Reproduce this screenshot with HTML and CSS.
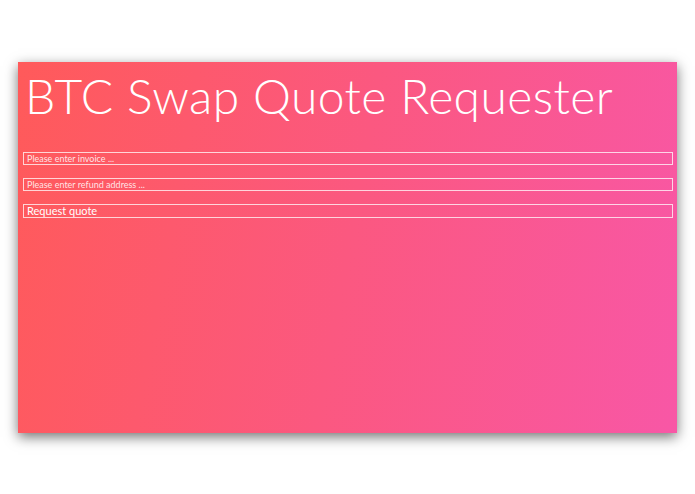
FILE: index.html
```html
<!DOCTYPE html>
<html>
<head>
<meta charset="utf-8">
<link rel="stylesheet" href="styles.css">
</head>
<body>
<div class="page">
  <main class="card">
    <h1 class="title">BTC Swap Quote Requester</h1>
    <form class="form">
      <input class="field" type="text" placeholder="Please enter invoice ...">
      <input class="field" type="text" placeholder="Please enter refund address ...">
      <button class="btn" type="button">Request quote</button>
    </form>
  </main>
</div>
</body>
</html>
```
FILE: styles.css
```css
html, body {
  margin: 0;
  padding: 0;
  background: #ffffff;
}
.page {
  padding: 62px 18px 61px;
}
.card {
  height: 371px;
  box-sizing: border-box;
  padding: 0 4px 0 5px;
  background: linear-gradient(100deg, #ff5a5a 0%, #fb5880 50%, #f857a6 100%);
  box-shadow: 0 4px 12px rgba(0, 0, 0, 0.55);
  font-family: Lato, "Noto Sans", sans-serif;
  color: #ffffff;
  overflow: hidden;
}
.title {
  margin: 0;
  padding: 6px 0 0 2px;
  font-weight: 300;
  font-size: 48px;
  line-height: 56px;
  letter-spacing: 0.4px;
}
.form {
  display: flex;
  flex-direction: column;
  gap: 13px;
  padding-top: 28px;
}
.field, .btn {
  box-sizing: border-box;
  width: 100%;
  margin: 0;
  padding: 0 3px;
  background: transparent;
  border: 1px solid rgba(255, 255, 255, 0.75);
  color: #ffffff;
  font-family: Lato, "Noto Sans", sans-serif;
  text-align: left;
}
.field {
  height: 13px;
  font-size: 9px;
  line-height: 11px;
}
.field::placeholder {
  color: rgba(255, 255, 255, 0.85);
}
.btn {
  height: 14px;
  font-size: 11px;
  line-height: 12px;
}
```
